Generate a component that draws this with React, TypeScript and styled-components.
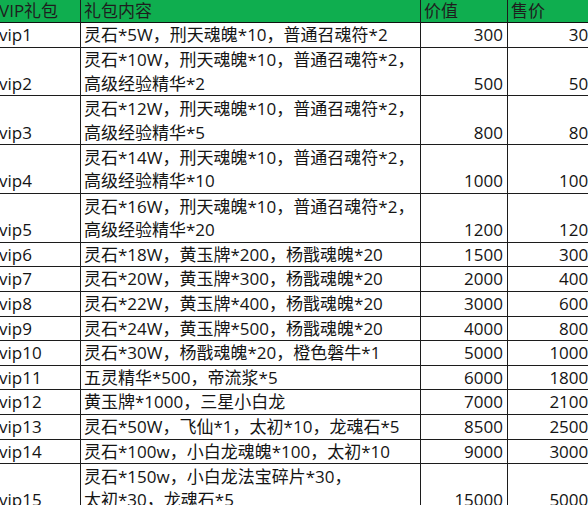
import * as React from 'react';
import styled, { createGlobalStyle } from 'styled-components';

const GlobalStyle = createGlobalStyle`
  html, body {
    margin: 0;
    padding: 0;
    background: #fff;
    overflow: hidden;
  }
  body {
    font-family: "Open Sans", "Noto Sans CJK SC", sans-serif;
    color: #141414;
  }
`;

const COLUMNS = '85px 340px 87px 95px';

const Sheet = styled.div`
  display: flex;
  flex-direction: column;
  width: 607px;
  margin-left: -4px;
`;

const Row = styled.div<{ $height: number; $head?: boolean }>`
  display: grid;
  grid-template-columns: ${COLUMNS};
  height: ${(p) => p.$height}px;
  background: ${(p) => (p.$head ? '#0fae4f' : '#fff')};
`;

const Cell = styled.div<{ $align?: 'left' | 'right' }>`
  box-sizing: border-box;
  display: flex;
  flex-direction: column;
  justify-content: flex-end;
  border-right: 1px solid #1c1c1c;
  border-bottom: 1px solid #1c1c1c;
  padding: 0 4px 0 3px;
  overflow: hidden;
  white-space: nowrap;
  font-size: 17px;
  line-height: 23.6px;
  text-align: ${(p) => p.$align ?? 'left'};
`;

const HeadCell = styled(Cell)`
  justify-content: center;
  line-height: 22px;
  color: #1e1e1e;
  border-bottom-color: #101010;
`;

const Line = styled.span`
  display: block;
`;

type Pack = {
  name: string;
  items: string[];
  value: number;
  price: number;
};

const packs: Pack[] = [
  { name: 'vip1', items: ['灵石*5W，刑天魂魄*10，普通召魂符*2'], value: 300, price: 300 },
  { name: 'vip2', items: ['灵石*10W，刑天魂魄*10，普通召魂符*2，', '高级经验精华*2'], value: 500, price: 500 },
  { name: 'vip3', items: ['灵石*12W，刑天魂魄*10，普通召魂符*2，', '高级经验精华*5'], value: 800, price: 800 },
  { name: 'vip4', items: ['灵石*14W，刑天魂魄*10，普通召魂符*2，', '高级经验精华*10'], value: 1000, price: 1000 },
  { name: 'vip5', items: ['灵石*16W，刑天魂魄*10，普通召魂符*2，', '高级经验精华*20'], value: 1200, price: 1200 },
  { name: 'vip6', items: ['灵石*18W，黄玉牌*200，杨戬魂魄*20'], value: 1500, price: 3000 },
  { name: 'vip7', items: ['灵石*20W，黄玉牌*300，杨戬魂魄*20'], value: 2000, price: 4000 },
  { name: 'vip8', items: ['灵石*22W，黄玉牌*400，杨戬魂魄*20'], value: 3000, price: 6000 },
  { name: 'vip9', items: ['灵石*24W，黄玉牌*500，杨戬魂魄*20'], value: 4000, price: 8000 },
  { name: 'vip10', items: ['灵石*30W，杨戬魂魄*20，橙色磐牛*1'], value: 5000, price: 10000 },
  { name: 'vip11', items: ['五灵精华*500，帝流浆*5'], value: 6000, price: 18000 },
  { name: 'vip12', items: ['黄玉牌*1000，三星小白龙'], value: 7000, price: 21000 },
  { name: 'vip13', items: ['灵石*50W，飞仙*1，太初*10，龙魂石*5'], value: 8500, price: 25000 },
  { name: 'vip14', items: ['灵石*100w，小白龙魂魄*100，太初*10'], value: 9000, price: 30000 },
  { name: 'vip15', items: ['灵石*150w，小白龙法宝碎片*30，', '太初*30，龙魂石*5'], value: 15000, price: 50000 },
];

const App: React.FC = () => {
  return (
    <>
      <GlobalStyle />
      <Sheet>
        <Row $height={23} $head>
          <HeadCell>VIP礼包</HeadCell>
          <HeadCell>礼包内容</HeadCell>
          <HeadCell>价值</HeadCell>
          <HeadCell>售价</HeadCell>
        </Row>
        {packs.map((p) => (
          <Row key={p.name} $height={p.items.length > 1 ? 48.8 : 24.6}>
            <Cell>{p.name}</Cell>
            <Cell>
              {p.items.map((line) => (
                <Line key={line}>{line}</Line>
              ))}
            </Cell>
            <Cell $align="right">{p.value}</Cell>
            <Cell $align="right">{p.price}</Cell>
          </Row>
        ))}
      </Sheet>
    </>
  );
};

export default App;
